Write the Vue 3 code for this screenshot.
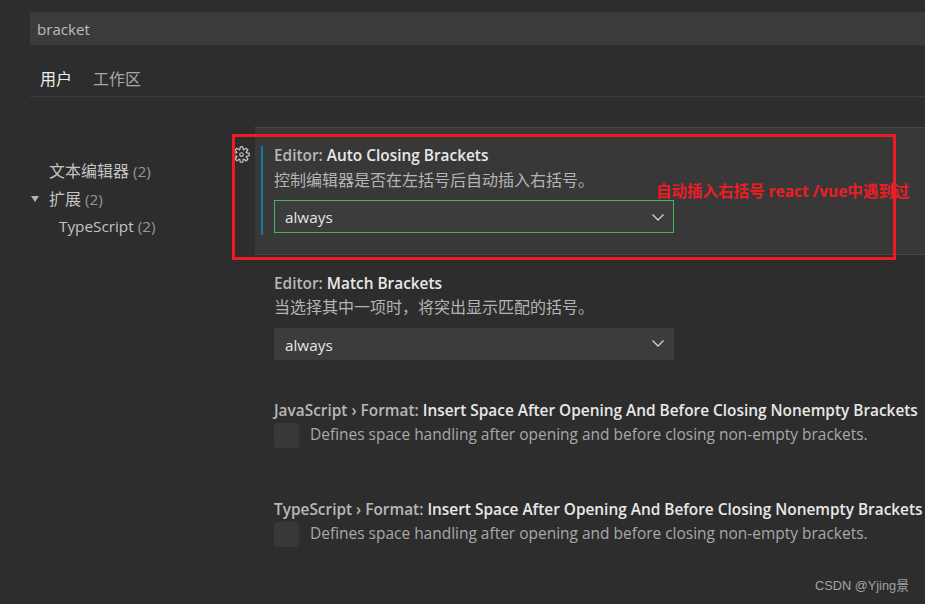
<script setup>
const sideItems = [
  { label: '文本编辑器', count: '(2)', cls: 'lvl1' },
  { label: '扩展', count: '(2)', cls: 'lvl1', arrow: true },
  { label: 'TypeScript', count: '(2)', cls: 'lvl2' }
]
const checks = [
  { id: 'js', scope: 'JavaScript › Format: ', name: 'Insert Space After Opening And Before Closing Nonempty Brackets' },
  { id: 'ts', scope: 'TypeScript › Format: ', name: 'Insert Space After Opening And Before Closing Nonempty Brackets' }
]
const checkDesc = 'Defines space handling after opening and before closing non-empty brackets.'
</script>

<template>
  <div class="page">
    <div class="search">bracket</div>
    <div class="tabs">
      <span class="tab active">用户</span>
      <span class="tab">工作区</span>
    </div>
    <div class="body">
      <nav class="side">
        <div v-for="item in sideItems" :key="item.label" class="side-row" :class="item.cls">
          <i v-if="item.arrow" class="tri"></i>
          <span class="side-label">{{ item.label }}</span>&nbsp;<span class="count">{{ item.count }}</span>
        </div>
      </nav>
      <main class="list">
        <section class="panel">
          <svg class="gear" width="19" height="19" viewBox="0 0 16 16" fill="#c8c8c8">
            <path fill-rule="evenodd" d="M9.1 4.4L8.6 2H7.4l-.5 2.4-.7.3-2-1.3-.9.8 1.3 2-.2.7-2.4.5v1.2l2.4.5.3.8-1.3 2 .8.8 2-1.3.8.3.4 2.3h1.2l.5-2.4.8-.3 2 1.3.8-.8-1.3-2 .3-.8 2.3-.4V7.4l-2.4-.5-.3-.8 1.3-2-.8-.8-2 1.3-.7-.2zM9.4 1l.5 2.4L12 2.1l2 2-1.4 2.1 2.4.4v2.8l-2.4.5L14 12l-2 2-2.1-1.4-.5 2.4H6.6l-.5-2.4L4 13.9l-2-2 1.4-2.1L1 9.4V6.6l2.4-.5L2.1 4l2-2 2.1 1.4.4-2.4h2.8zm.6 7c0 1.1-.9 2-2 2s-2-.9-2-2 .9-2 2-2 2 .9 2 2zM8 9c.6 0 1-.4 1-1s-.4-1-1-1-1 .4-1 1 .4 1 1 1z" />
          </svg>
          <div class="modified">
            <div class="title"><span class="scope">Editor: </span><b>Auto Closing Brackets</b></div>
            <div class="desc">控制编辑器是否在左括号后自动插入右括号。</div>
            <div class="select focused">
              <span>always</span>
              <svg width="14" height="14" viewBox="0 0 14 14" fill="none" stroke="#d0d0d0" stroke-width="1.3"><path d="M1.5 4.5 7 10l5.5-5.5" /></svg>
            </div>
          </div>
        </section>
        <section class="plain second">
          <div class="title"><span class="scope">Editor: </span><b>Match Brackets</b></div>
          <div class="desc">当选择其中一项时，将突出显示匹配的括号。</div>
          <div class="select">
            <span class="select-text">always</span>
            <svg width="14" height="14" viewBox="0 0 14 14" fill="none" stroke="#d0d0d0" stroke-width="1.3"><path d="M1.5 3.5 7 9l5.5-5.5" /></svg>
          </div>
        </section>
        <section v-for="c in checks" :key="c.id" class="plain check" :class="c.id">
          <div class="title"><span class="scope">{{ c.scope }}</span><b>{{ c.name }}</b></div>
          <div class="check-row">
            <span class="box"></span>
            <span class="desc-en">{{ checkDesc }}</span>
          </div>
        </section>
      </main>
    </div>
    <div class="red-box"></div>
    <div class="note">自动插入右括号 react /vue中遇到过</div>
    <div class="mark">CSDN @Yjing景</div>
  </div>
</template>

<style>
html, body { margin: 0; background: #2d2d2d; overflow: hidden; }
</style>

<style scoped>
.page {
  position: relative;
  width: 925px;
  height: 604px;
  overflow: hidden;
  background: #2d2d2d;
  color: #c4c4c4;
  font-family: "Open Sans", "Noto Sans CJK SC", sans-serif;
  font-size: 15.3px;
}
.search {
  box-sizing: border-box;
  height: 33px;
  margin: 12px 0 0 30px;
  padding: 1px 0 0 7px;
  background: #3b3b3b;
  color: #bdbdbd;
  font-size: 15.1px;
  line-height: 33px;
}
.tabs {
  box-sizing: border-box;
  display: flex;
  gap: 21px;
  height: 52px;
  margin-left: 30px;
  padding: 24px 0 0 10px;
  border-bottom: 1px solid #3c3c3c;
  font-size: 16px;
  line-height: 21px;
}
.tab { color: #a8a8a8; }
.tab.active { color: #ececec; }
.body { display: flex; }
.side {
  box-sizing: border-box;
  width: 255px;
  padding-top: 64px;
}
.side-row {
  position: relative;
  height: 27.5px;
  line-height: 21px;
  white-space: nowrap;
}
.lvl1 { padding-left: 49px; }
.lvl1 .side-label { font-size: 16px; }
.lvl2 { padding-left: 59px; }
.count { color: #969696; }
.tri {
  position: absolute;
  left: 31px;
  top: 7px;
  border-left: 4px solid transparent;
  border-right: 4px solid transparent;
  border-top: 6px solid #b4b4b4;
}
.list { flex: 1; min-width: 0; padding-top: 30px; }
.panel {
  position: relative;
  box-sizing: border-box;
  height: 128px;
  padding: 18px 0 0 6px;
  background: #383838;
  border-top: 1px solid #484848;
  border-bottom: 1px solid #484848;
}
.gear { position: absolute; left: -23px; top: 17px; }
.modified {
  box-sizing: border-box;
  height: 89px;
  padding-left: 11px;
  border-left: 2px solid #0c7d9d;
}
.title {
  height: 19px;
  line-height: 19px;
  font-size: 15.4px;
  font-weight: 600;
  color: #b8b8b8;
  white-space: nowrap;
}
.title b { font-weight: 600; color: #e8e8e8; }
.desc {
  margin-top: 5px;
  height: 20px;
  font-size: 16px;
  line-height: 20px;
  color: #b4b4b4;
  white-space: nowrap;
}
.select {
  box-sizing: border-box;
  display: flex;
  align-items: center;
  justify-content: space-between;
  width: 400px;
  height: 32px;
  margin-top: 11px;
  padding: 0 9px 0 11px;
  background: #3c3c3c;
  color: #e6e6e6;
}
.select-text { padding-top: 2px; }
.select.focused {
  height: 33px;
  margin-top: 10px;
  padding: 0 8px 0 10px;
  border: 1px solid #45b35f;
}
.plain { padding-left: 19px; }
.second { padding-top: 19px; }
.second .desc { margin-top: 4px; }
.check { height: 80px; }
.check.js { margin-top: 41px; height: 99px; }
.check-row { display: flex; align-items: center; gap: 11px; margin-top: 3px; }
.box { width: 25px; height: 25px; border-radius: 3px; background: #383838; flex: none; }
.desc-en { margin-top: -4px; font-size: 15.47px; color: #a8a8a8; white-space: nowrap; }
.red-box {
  position: absolute;
  left: 232px;
  top: 134px;
  box-sizing: border-box;
  width: 664px;
  height: 126px;
  border: 3px solid #ed1c24;
}
.note {
  position: absolute;
  left: 656px;
  top: 182px;
  color: #ed1c24;
  font-size: 15.5px;
  line-height: 18px;
  font-weight: 700;
  white-space: nowrap;
}
.mark {
  position: absolute;
  right: 16px;
  top: 578px;
  color: #a3a3a3;
  font-family: "Liberation Sans", "Noto Sans CJK SC", sans-serif;
  font-size: 12.8px;
  line-height: 16px;
}
</style>
